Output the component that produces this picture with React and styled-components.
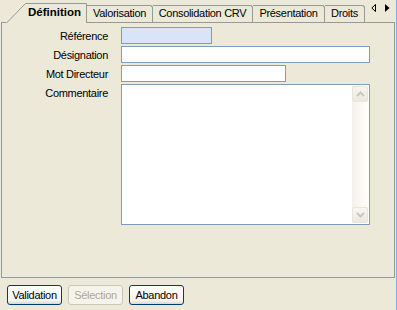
import React from 'react'
import styled, { createGlobalStyle } from 'styled-components'

const Global = createGlobalStyle`
  html, body {
    margin: 0;
    padding: 0;
    background: #ece9d8;
  }
  body {
    font-family: "Liberation Sans", Arial, sans-serif;
    font-size: 11px;
    letter-spacing: -0.3px;
    color: #000;
  }
`

const Frame = styled.div`
  width: 397px;
  height: 310px;
  box-sizing: border-box;
  border-right: 1px solid #86a8e4;
  background: #ece9d8;
  display: flex;
  flex-direction: column;
  overflow: hidden;
`

const TabStrip = styled.div`
  height: 22px;
  display: flex;
  align-items: flex-end;
  padding-left: 6px;
  position: relative;
`

const ActiveTab = styled.div`
  position: relative;
  width: 81px;
  height: 20px;
  margin-bottom: -1px;
  z-index: 1;
  background: #ece9d8;
  box-sizing: border-box;
  padding: 3px 0 0 22px;
  font-weight: bold;
  font-size: 11.5px;
  letter-spacing: 0;
`

const TabShape = styled.svg`
  position: absolute;
  left: 0;
  top: 0;
  pointer-events: none;
`

const TabLabel = styled.span`
  position: relative;
`

const Tab = styled.div`
  width: ${({ $w }) => $w}px;
  height: 17px;
  box-sizing: border-box;
  border-top: 1px solid #919b9c;
  border-right: 1px solid #919b9c;
  border-radius: 0 3px 0 0;
  display: flex;
  align-items: center;
  justify-content: center;
  padding-bottom: 2px;
`

const Scroller = styled.div`
  display: flex;
  gap: 9px;
  margin-left: 6px;
  align-self: flex-start;
  padding-top: 4px;
`

const Panel = styled.div`
  margin-left: 1px;
  width: 394px;
  height: 256px;
  box-sizing: border-box;
  border: 1px solid #919b9c;
  padding-top: 4px;
`

const Form = styled.div`
  display: grid;
  grid-template-columns: 106px 249px;
  grid-template-rows: 17px 17px 17px 141px;
  column-gap: 13px;
  row-gap: 2px;
`

const Label = styled.div`
  text-align: right;
  align-self: ${({ $top }) => ($top ? 'start' : 'center')};
  padding-top: ${({ $top }) => ($top ? '3px' : '0')};
`

const Field = styled.div`
  width: ${({ $w }) => $w}px;
  height: 17px;
  box-sizing: border-box;
  border: 1px solid #7f9db9;
  background: ${({ $tint }) => ($tint ? '#d9e4f8' : '#fff')};
`

const Memo = styled.div`
  width: 249px;
  height: 141px;
  box-sizing: border-box;
  border: 1px solid #7f9db9;
  background: #fff;
  display: flex;
  justify-content: flex-end;
  padding: 1px 1px 1px 0;
`

const ScrollBar = styled.div`
  width: 16px;
  display: flex;
  flex-direction: column;
  justify-content: space-between;
  background: linear-gradient(to right, #f3f1ea, #fefefb);
`

const ScrollButton = styled.div`
  height: 16px;
  box-sizing: border-box;
  border: 1px solid #e8e6da;
  border-radius: 2px;
  background: linear-gradient(to bottom, #f6f5ef, #ebe9df);
  display: flex;
  align-items: center;
  justify-content: center;
`

const Footer = styled.div`
  display: flex;
  gap: 6px;
  padding: 7px 0 0 7px;
`

const Button = styled.button`
  width: 55px;
  height: 20px;
  padding: 0;
  box-sizing: border-box;
  font-family: "Liberation Sans", Arial, sans-serif;
  font-size: 11px;
  letter-spacing: -0.3px;
  border-radius: 3px;
  border: 1px solid ${({ disabled }) => (disabled ? '#c9c7ba' : '#003c74')};
  color: ${({ disabled }) => (disabled ? '#aca899' : '#000')};
  background: ${({ disabled }) =>
    disabled ? '#f5f4ea' : 'linear-gradient(to bottom, #ffffff, #f4f4f0 80%, #dcd7cc)'};
`

function Chevron({ up }) {
  return (
    <svg width="9" height="6" viewBox="0 0 9 6">
      <path
        d={up ? 'M1 5 L4.5 1.5 L8 5' : 'M1 1 L4.5 4.5 L8 1'}
        fill="none"
        stroke="#cac8bb"
        strokeWidth="2"
      />
    </svg>
  )
}

export default function App() {
  return (
    <>
      <Global />
      <Frame>
        <TabStrip>
          <ActiveTab>
            <TabShape width="81" height="20" viewBox="0 0 81 20">
              <path d="M0.5 20 L19.5 0.5 L80.5 0.5 L80.5 20" fill="#ece9d8" stroke="#919b9c" />
            </TabShape>
            <TabLabel>Définition</TabLabel>
          </ActiveTab>
          <Tab $w={66}>Valorisation</Tab>
          <Tab $w={100}>Consolidation CRV</Tab>
          <Tab $w={72}>Présentation</Tab>
          <Tab $w={40}>Droits</Tab>
          <Scroller>
            <svg width="5" height="8" viewBox="0 0 5 8">
              <path d="M4.5 0.5 L0.8 4 L4.5 7.5 Z" fill="none" stroke="#000" />
            </svg>
            <svg width="5" height="8" viewBox="0 0 5 8">
              <path d="M0 0 L4.5 4 L0 8 Z" fill="#000" />
            </svg>
          </Scroller>
        </TabStrip>
        <Panel>
          <Form>
            <Label>Référence</Label>
            <Field $w={91} $tint />
            <Label>Désignation</Label>
            <Field $w={249} />
            <Label>Mot Directeur</Label>
            <Field $w={165} />
            <Label $top>Commentaire</Label>
            <Memo>
              <ScrollBar>
                <ScrollButton><Chevron up /></ScrollButton>
                <ScrollButton><Chevron /></ScrollButton>
              </ScrollBar>
            </Memo>
          </Form>
        </Panel>
        <Footer>
          <Button>Validation</Button>
          <Button disabled>Sélection</Button>
          <Button>Abandon</Button>
        </Footer>
      </Frame>
    </>
  )
}
